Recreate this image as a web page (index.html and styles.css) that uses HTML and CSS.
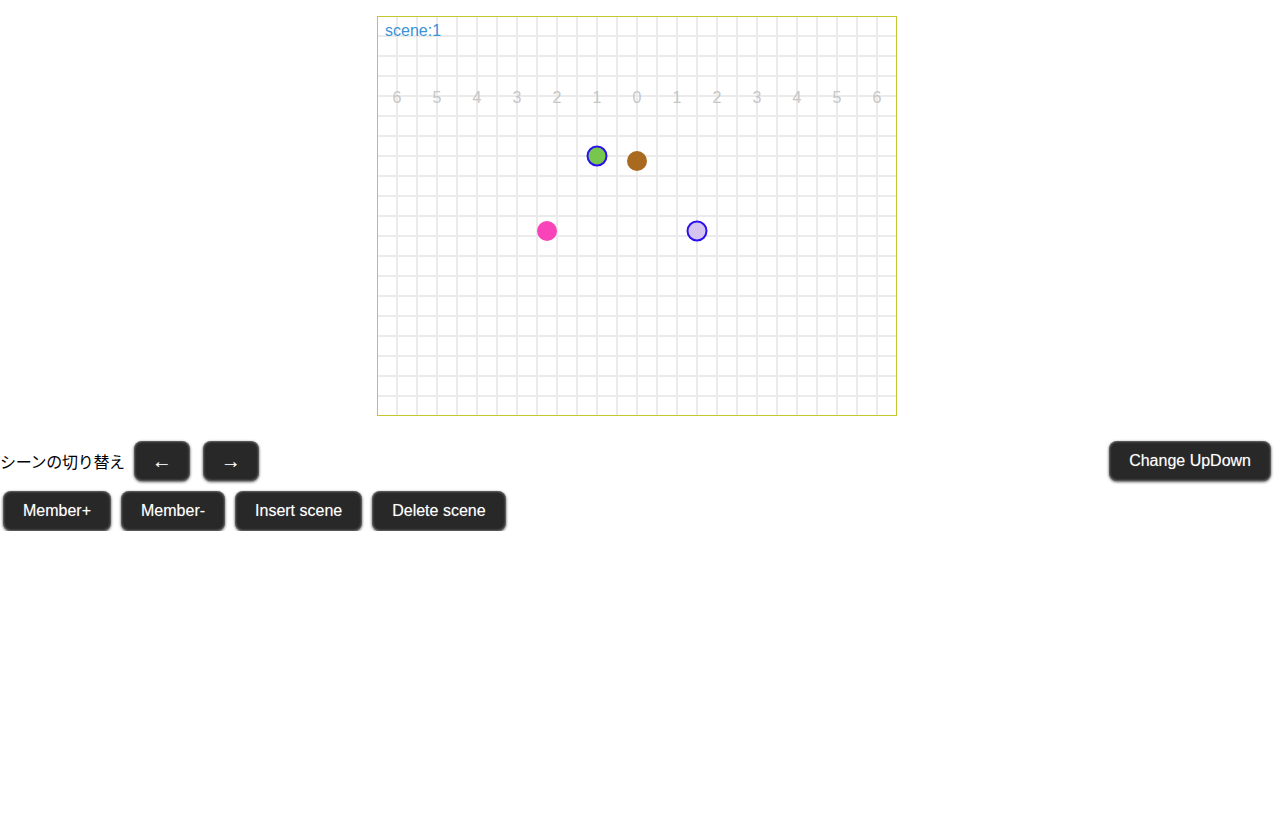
FILE: index.html
```html
<!DOCTYPE html>
<html lang="ja">
<head>
<meta charset="utf-8">
<title>scene</title>
<link rel="stylesheet" href="styles.css">
</head>
<body>
<div class="stage">
  <svg class="board" width="520" height="400" viewBox="0 0 520 400">
    <g class="grid">
      <line x1="20" y1="0" x2="20" y2="400"/><line x1="40" y1="0" x2="40" y2="400"/><line x1="60" y1="0" x2="60" y2="400"/><line x1="80" y1="0" x2="80" y2="400"/><line x1="100" y1="0" x2="100" y2="400"/><line x1="120" y1="0" x2="120" y2="400"/><line x1="140" y1="0" x2="140" y2="400"/><line x1="160" y1="0" x2="160" y2="400"/><line x1="180" y1="0" x2="180" y2="400"/><line x1="200" y1="0" x2="200" y2="400"/><line x1="220" y1="0" x2="220" y2="400"/><line x1="240" y1="0" x2="240" y2="400"/><line x1="260" y1="0" x2="260" y2="400"/><line x1="280" y1="0" x2="280" y2="400"/><line x1="300" y1="0" x2="300" y2="400"/><line x1="320" y1="0" x2="320" y2="400"/><line x1="340" y1="0" x2="340" y2="400"/><line x1="360" y1="0" x2="360" y2="400"/><line x1="380" y1="0" x2="380" y2="400"/><line x1="400" y1="0" x2="400" y2="400"/><line x1="420" y1="0" x2="420" y2="400"/><line x1="440" y1="0" x2="440" y2="400"/><line x1="460" y1="0" x2="460" y2="400"/><line x1="480" y1="0" x2="480" y2="400"/><line x1="500" y1="0" x2="500" y2="400"/>
      <line x1="0" y1="20" x2="520" y2="20"/><line x1="0" y1="40" x2="520" y2="40"/><line x1="0" y1="60" x2="520" y2="60"/><line x1="0" y1="80" x2="520" y2="80"/><line x1="0" y1="100" x2="520" y2="100"/><line x1="0" y1="120" x2="520" y2="120"/><line x1="0" y1="140" x2="520" y2="140"/><line x1="0" y1="160" x2="520" y2="160"/><line x1="0" y1="180" x2="520" y2="180"/><line x1="0" y1="200" x2="520" y2="200"/><line x1="0" y1="220" x2="520" y2="220"/><line x1="0" y1="240" x2="520" y2="240"/><line x1="0" y1="260" x2="520" y2="260"/><line x1="0" y1="280" x2="520" y2="280"/><line x1="0" y1="300" x2="520" y2="300"/><line x1="0" y1="320" x2="520" y2="320"/><line x1="0" y1="340" x2="520" y2="340"/><line x1="0" y1="360" x2="520" y2="360"/><line x1="0" y1="380" x2="520" y2="380"/>
    </g>
    <g class="labels">
      <text x="20" y="87">6</text><text x="60" y="87">5</text><text x="100" y="87">4</text><text x="140" y="87">3</text><text x="180" y="87">2</text><text x="220" y="87">1</text><text x="260" y="87">0</text><text x="300" y="87">1</text><text x="340" y="87">2</text><text x="380" y="87">3</text><text x="420" y="87">4</text><text x="460" y="87">5</text><text x="500" y="87">6</text>
    </g>
    <text class="scene" x="8" y="20">scene:1</text>
    <circle class="m-green" cx="220" cy="140" r="9.5"/>
    <circle class="m-brown" cx="260" cy="145" r="10"/>
    <circle class="m-pink" cx="170" cy="215" r="10"/>
    <circle class="m-lav" cx="320" cy="215" r="9.5"/>
    <rect class="frame" x="0.5" y="0.5" width="519" height="399"/>
  </svg>
</div>
<div class="row row-top">
  <span class="label">シーンの切り替え</span>
  <button class="btn btn-prev">←</button>
  <button class="btn btn-next">→</button>
  <button class="btn btn-updown">Change UpDown</button>
</div>
<div class="row row-bottom">
  <button class="btn">Member+</button>
  <button class="btn">Member-</button>
  <button class="btn">Insert scene</button>
  <button class="btn">Delete scene</button>
</div>
</body>
</html>
```
FILE: styles.css
```css
html, body {
  margin: 0;
  padding: 0;
  background: #fff;
  font-family: "Liberation Sans", Arial, "Noto Sans CJK JP", sans-serif;
  font-size: 16px;
  color: #000;
}
.stage {
  display: flex;
  justify-content: center;
  padding-top: 16px;
  padding-right: 1px;
}
.board {
  display: block;
  width: 520px;
  height: 400px;
}
.grid line {
  stroke: #ebebeb;
  stroke-width: 2;
}
.frame {
  fill: none;
  stroke: #c3c832;
  stroke-width: 1;
}
.labels text {
  fill: #c6c6c6;
  font-family: "Liberation Sans", Arial, sans-serif;
  font-size: 16px;
  text-anchor: middle;
}
.scene {
  fill: #3b92d6;
  font-family: "Liberation Sans", Arial, sans-serif;
  font-size: 16px;
}
.m-green { fill: #77c74e; stroke: #2a10ee; stroke-width: 2; }
.m-brown { fill: #a96a20; }
.m-pink { fill: #f943b8; }
.m-lav { fill: #d5c5ee; stroke: #2a10ee; stroke-width: 2; }

.row {
  display: flex;
  align-items: center;
}
.row-top {
  margin-top: 25px;
  height: 40px;
  padding-right: 4px;
}
.label {
  font-family: "Noto Sans CJK JP", sans-serif;
  font-size: 16px;
  margin-right: 9px;
  letter-spacing: -0.3px;
}
.btn {
  height: 40px;
  padding: 0 20px;
  border: 0;
  border-radius: 8px;
  background: #282828;
  color: #fff;
  font-family: "Liberation Sans", Arial, sans-serif;
  font-size: 16px;
  box-shadow: inset 0 0 2px 1px rgba(255,255,255,0.3), 0 1px 3px rgba(0,0,0,0.7);
  text-shadow: 0 0 1px rgba(255,255,255,0.4);
}
.btn-prev, .btn-next {
  width: 56px;
  padding: 0;
  font-size: 20px;
}
.btn-next {
  margin-left: 13px;
}
.btn-updown {
  margin-left: auto;
}
.row-bottom {
  margin-top: 10px;
  padding-left: 3px;
  gap: 10px;
}
```
